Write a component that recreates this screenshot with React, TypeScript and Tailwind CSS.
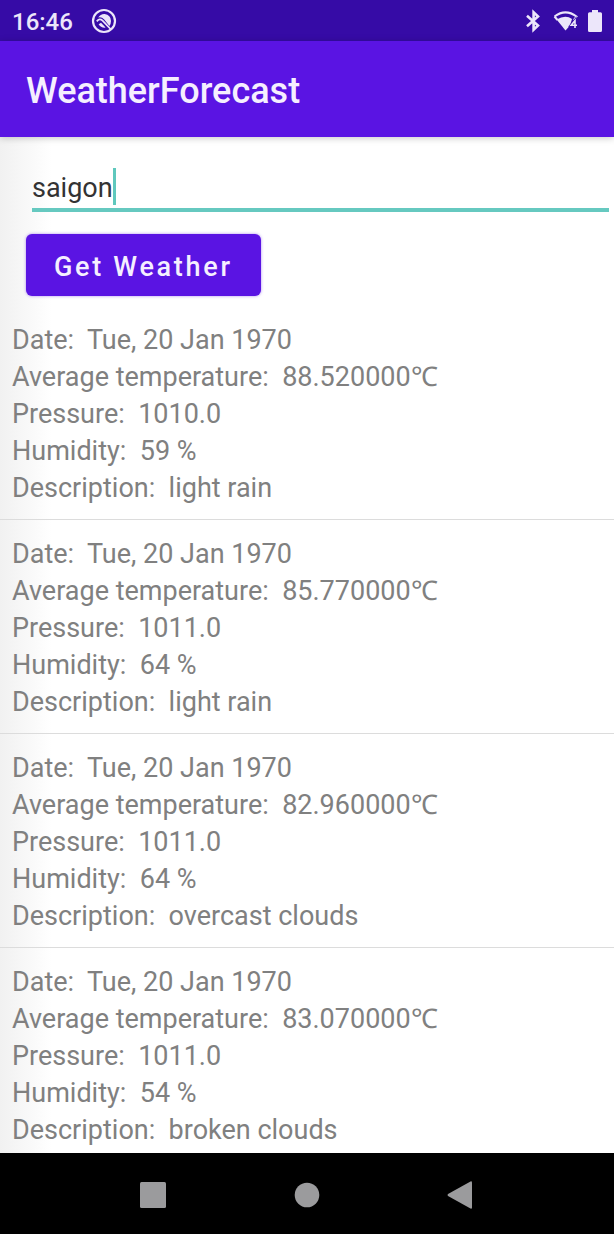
import { useState } from "react";

type Forecast = {
  date: string;
  temperature: string;
  pressure: string;
  humidity: string;
  description: string;
};

const forecasts: Forecast[] = [
  { date: "Tue, 20 Jan 1970", temperature: "88.520000℃", pressure: "1010.0", humidity: "59 %", description: "light rain" },
  { date: "Tue, 20 Jan 1970", temperature: "85.770000℃", pressure: "1011.0", humidity: "64 %", description: "light rain" },
  { date: "Tue, 20 Jan 1970", temperature: "82.960000℃", pressure: "1011.0", humidity: "64 %", description: "overcast clouds" },
  { date: "Tue, 20 Jan 1970", temperature: "83.070000℃", pressure: "1011.0", humidity: "54 %", description: "broken clouds" },
];

function StatusBar() {
  return (
    <div className="flex h-[41px] items-center bg-[#360ba6] pr-[11px] pl-3 text-[#ece6fa]">
      <span className="pt-0.5 text-[24px] leading-none font-medium">16:46</span>
      <svg className="ml-[18px] size-[26px]" viewBox="0 0 26 26" aria-hidden="true">
        <circle cx="13" cy="13" r="11" fill="none" stroke="currentColor" strokeWidth="2.2" />
        <path d="M7.2 9.6Q9.6 5.8 13.6 6Q19.8 6.8 20 13Q20 15.8 18.4 18L13.2 11.6Q10.4 8.6 7.2 9.6Z" fill="currentColor" />
        <path d="M5.8 13.4Q8.4 9.8 11.6 12.6L20 21.5" fill="none" stroke="currentColor" strokeWidth="1.8" />
        <path d="M7.6 16.2L10 14.8L14.6 19.6Q10 20.2 7.6 16.2Z" fill="currentColor" />
      </svg>
      <div className="ml-auto flex items-center">
        <svg className="h-6 w-4" viewBox="0 0 16 24" fill="none" stroke="currentColor" strokeWidth="2.6" aria-hidden="true">
          <path d="M2 6.8L13 16.6L8.6 20.8V3.2L13 7.4L2 17.2" />
        </svg>
        <svg className="ml-3 h-6 w-[26px]" viewBox="0 0 26 24" aria-hidden="true">
          <path d="M1.5 7.5Q12.5 -0.8 23.5 7.5L20.8 11" fill="none" stroke="currentColor" strokeWidth="2" />
          <path d="M1.5 7.5L4.5 11" fill="none" stroke="currentColor" strokeWidth="2" />
          <path d="M3.6 10.6Q12.5 5 19 10L17 16.5L12.5 21.5Z" fill="currentColor" />
          <path d="M22 19V11.5L18.2 16.3H24" fill="none" stroke="#360ba6" strokeWidth="3" />
          <path d="M22 19V11.5L18.2 16.3H24" fill="none" stroke="currentColor" strokeWidth="1.6" />
        </svg>
        <svg className="ml-2 h-6 w-4" viewBox="0 0 16 24" fill="currentColor" aria-hidden="true">
          <path d="M5 1H11V3.2H13.5Q15 3.2 15 4.7V21.5Q15 23 13.5 23H2.5Q1 23 1 21.5V4.7Q1 3.2 2.5 3.2H5Z" />
        </svg>
      </div>
    </div>
  );
}

function ForecastItem({ forecast }: { forecast: Forecast }) {
  const lines = [
    ["Date:", forecast.date],
    ["Average temperature:", forecast.temperature],
    ["Pressure:", forecast.pressure],
    ["Humidity:", forecast.humidity],
    ["Description:", forecast.description],
  ];
  return (
    <li className="border-b border-[#dcdcdc] px-3 pt-4 pb-3 last:border-b-0 last:pb-1">
      {lines.map(([label, value]) => (
        <p key={label} className="text-[27px] leading-[37px] whitespace-pre text-[#808080]">
          {`${label}  ${value}`}
        </p>
      ))}
    </li>
  );
}

function NavigationBar() {
  return (
    <nav className="grid h-[81px] grid-cols-3 items-center justify-items-center bg-black px-[76px] pt-0.5 text-[#9b9b9d]">
      <button type="button" aria-label="Recent apps">
        <svg className="size-7" viewBox="0 0 28 28" fill="currentColor">
          <rect x="1" y="1" width="26" height="26" rx="1.5" />
        </svg>
      </button>
      <button type="button" aria-label="Home">
        <svg className="size-7" viewBox="0 0 28 28" fill="currentColor">
          <circle cx="14" cy="14" r="12.3" />
        </svg>
      </button>
      <button type="button" aria-label="Back">
        <svg className="size-7" viewBox="0 0 28 28" fill="currentColor">
          <path d="M1 13Q0 14 1 15L23.5 27.6Q25 28 25 26.5V1.5Q25 0 23.5 0.4Z" />
        </svg>
      </button>
    </nav>
  );
}

export default function App() {
  const [city, setCity] = useState("saigon");
  return (
    <div className="flex min-h-screen flex-col bg-white font-['Roboto',sans-serif]">
      <StatusBar />
      <header className="z-10 flex h-24 items-center bg-[#5a14e3] px-[26px] pt-1 shadow-[0_1px_7px_rgba(0,0,0,0.22)]">
        <h1 className="text-[36px] leading-none font-medium text-[#f5efff]">WeatherForecast</h1>
      </header>
      <main className="flex-1 bg-linear-to-r from-[#f1f1f1] to-white to-[52px]">
        <form className="pt-[30px]" onSubmit={(event) => event.preventDefault()}>
          <label className="mr-[5px] ml-8 flex h-[45px] items-start border-b-4 border-[#66c9c0]">
            <input
              className="field-sizing-content h-[41px] bg-transparent text-[27px] text-[#333333] caret-transparent outline-none"
              type="text"
              aria-label="City"
              value={city}
              onChange={(event) => setCity(event.target.value)}
            />
            <span className="mt-px h-[37px] w-[3px] bg-[#5fc8bd]" />
          </label>
          <button
            type="submit"
            className="mt-[22px] mb-[10px] ml-[26px] block h-[62px] rounded-md bg-[#5a14e3] px-7 pt-1 text-[27px] leading-none font-medium tracking-widest text-[#f5efff] shadow-[0_0_3px_rgba(90,20,227,0.5)]"
          >
            Get Weather
          </button>
        </form>
        <ul>
          {forecasts.map((forecast, index) => (
            <ForecastItem key={index} forecast={forecast} />
          ))}
        </ul>
      </main>
      <NavigationBar />
    </div>
  );
}
